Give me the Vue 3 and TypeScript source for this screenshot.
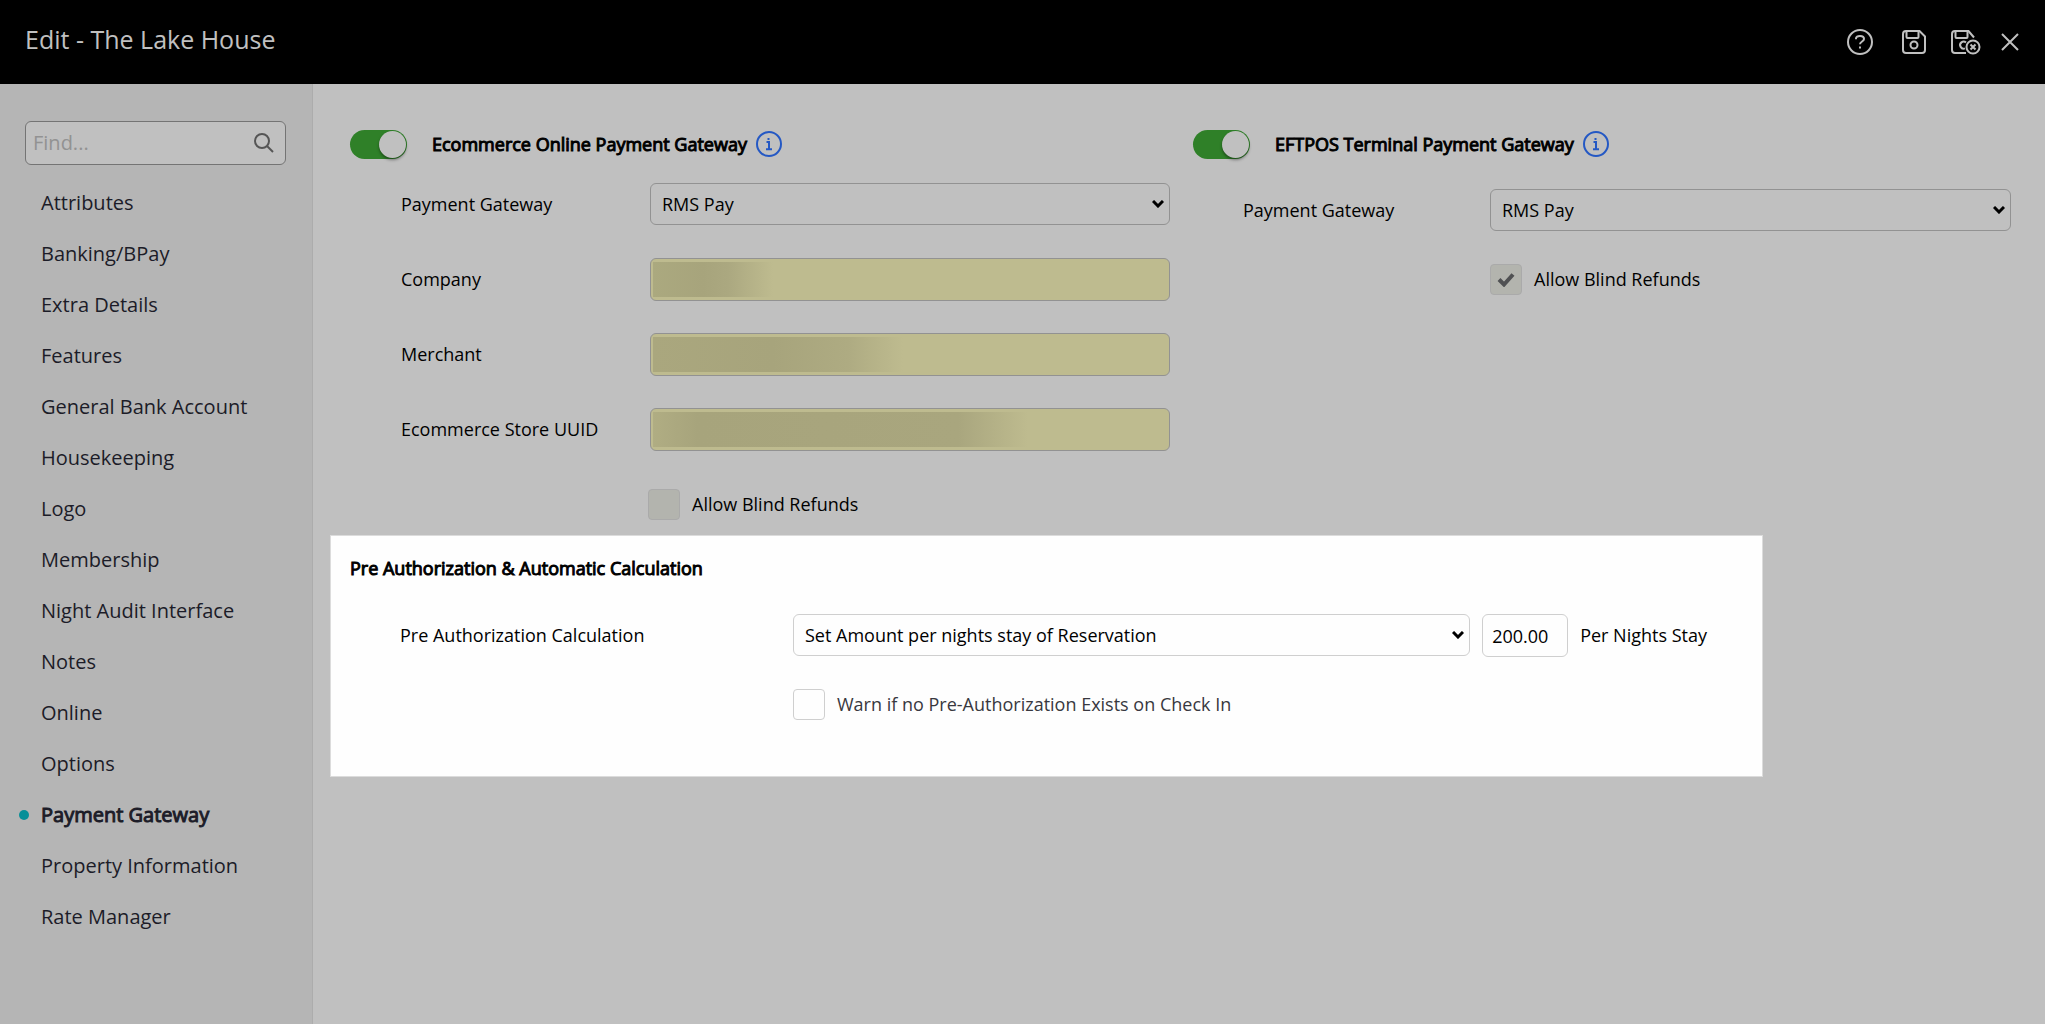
<script setup lang="ts">
import { ref } from 'vue'

interface MaskedField {
  id: string
  label: string
  mask: 'short' | 'medium' | 'long'
}

const menu: string[] = [
  'Attributes',
  'Banking/BPay',
  'Extra Details',
  'Features',
  'General Bank Account',
  'Housekeeping',
  'Logo',
  'Membership',
  'Night Audit Interface',
  'Notes',
  'Online',
  'Options',
  'Payment Gateway',
  'Property Information',
  'Rate Manager',
]
const active = ref('Payment Gateway')
const search = ref('')

const maskedFields: MaskedField[] = [
  { id: 'company', label: 'Company', mask: 'short' },
  { id: 'merchant', label: 'Merchant', mask: 'medium' },
  { id: 'store-uuid', label: 'Ecommerce Store UUID', mask: 'long' },
]

const ecommerceOn = ref(true)
const eftposOn = ref(true)
const ecommerceGateway = ref('RMS Pay')
const eftposGateway = ref('RMS Pay')
const calculation = ref('Set Amount per nights stay of Reservation')
const amount = ref('200.00')
const warn = ref(false)
</script>

<template>
  <div class="page">
    <header class="topbar">
      <h1>Edit - The Lake House</h1>
      <div class="actions">
        <button type="button" aria-label="Help">
          <svg width="26" height="26" viewBox="0 0 26 26">
            <circle cx="13" cy="13" r="12" />
            <path d="M9 10.2V9.6C9 7.9 10.6 7 13 7s4 1 4 3c0 2.400-4 2.600-4 5.200" />
            <path d="M13 17.600v2" />
          </svg>
        </button>
        <button type="button" aria-label="Save">
          <svg width="24" height="24" viewBox="0 0 24 24">
            <path d="M4 1h13.500L23 6.500V20a3 3 0 0 1-3 3H4a3 3 0 0 1-3-3V4a3 3 0 0 1 3-3z" />
            <path d="M4.500 1v6a1 1 0 0 0 1 1h10a1 1 0 0 0 1-1V1" />
            <circle cx="12" cy="15" r="3.500" />
          </svg>
        </button>
        <button type="button" aria-label="Save and close">
          <svg width="30" height="26" viewBox="0 0 30 26">
            <path d="M15 24H4a3 3 0 0 1-3-3V5a3 3 0 0 1 3-3h13.500L23 8.500" />
            <path d="M4.500 2v6a1 1 0 0 0 1 1h10a1 1 0 0 0 1-1V2" />
            <path d="M15 13.500a3.500 3.500 0 1 0-1 5.800" />
            <circle cx="22" cy="18" r="6.500" />
            <path d="M19.500 15.500l5 5M24.500 15.500l-5 5" />
          </svg>
        </button>
        <button type="button" aria-label="Close">
          <svg width="18" height="18" viewBox="0 0 18 18">
            <path d="M1 1l16 16M17 1L1 17" />
          </svg>
        </button>
      </div>
    </header>

    <div class="body">
      <aside class="sidebar">
        <div class="search">
          <input v-model="search" type="text" placeholder="Find..." aria-label="Find" />
          <svg width="20" height="20" viewBox="0 0 20 20">
            <circle cx="8" cy="8" r="7" />
            <path d="M13 13l6 6" />
          </svg>
        </div>
        <nav>
          <a
            v-for="item in menu"
            :key="item"
            href="#"
            :class="{ active: item === active }"
            @click.prevent="active = item"
          >{{ item }}</a>
        </nav>
      </aside>

      <main>
        <div class="columns">
          <section class="gateway">
            <div class="heading">
              <input id="ecommerce" v-model="ecommerceOn" class="toggle" type="checkbox" role="switch" />
              <label for="ecommerce" class="strong">Ecommerce Online Payment Gateway</label>
              <button type="button" class="info" aria-label="About the online gateway">
                <svg width="26" height="26" viewBox="0 0 26 26">
                  <circle cx="13" cy="13" r="12" />
                  <path d="M10.500 11H13v7M10 18.200h6M12.500 7v2" />
                </svg>
              </button>
            </div>
            <div class="row">
              <label for="ecommerce-gateway">Payment Gateway</label>
              <div class="picker">
                <select id="ecommerce-gateway" v-model="ecommerceGateway">
                  <option>RMS Pay</option>
                </select>
                <svg width="12" height="8" viewBox="0 0 12 8"><path d="M1 1l5 5 5-5" /></svg>
              </div>
            </div>
            <div v-for="field in maskedFields" :key="field.id" class="row">
              <label :for="field.id">{{ field.label }}</label>
              <div class="masked">
                <input :id="field.id" type="text" readonly />
                <span :class="['mask', field.mask]"></span>
              </div>
            </div>
            <label class="check indent">
              <span class="box"><input type="checkbox" disabled /></span>
              <span class="text">Allow Blind Refunds</span>
            </label>
          </section>

          <section class="gateway eftpos">
            <div class="heading">
              <input id="eftpos" v-model="eftposOn" class="toggle" type="checkbox" role="switch" />
              <label for="eftpos" class="strong">EFTPOS Terminal Payment Gateway</label>
              <button type="button" class="info" aria-label="About the terminal gateway">
                <svg width="26" height="26" viewBox="0 0 26 26">
                  <circle cx="13" cy="13" r="12" />
                  <path d="M10.500 11H13v7M10 18.200h6M12.500 7v2" />
                </svg>
              </button>
            </div>
            <div class="row">
              <label for="eftpos-gateway">Payment Gateway</label>
              <div class="picker">
                <select id="eftpos-gateway" v-model="eftposGateway">
                  <option>RMS Pay</option>
                </select>
                <svg width="12" height="8" viewBox="0 0 12 8"><path d="M1 1l5 5 5-5" /></svg>
              </div>
            </div>
            <label class="check indent">
              <span class="box">
                <input type="checkbox" checked disabled />
                <svg width="18" height="15" viewBox="0 0 18 15">
                  <path d="M2 7.500l5 5L16 2.500" />
                </svg>
              </span>
              <span class="text">Allow Blind Refunds</span>
            </label>
          </section>
        </div>

        <section class="panel">
          <h2 class="strong">Pre Authorization &amp; Automatic Calculation</h2>
          <div class="calc">
            <label for="calculation">Pre Authorization Calculation</label>
            <div class="picker">
              <select id="calculation" v-model="calculation">
                <option>Set Amount per nights stay of Reservation</option>
              </select>
              <svg width="12" height="8" viewBox="0 0 12 8"><path d="M1 1l5 5 5-5" /></svg>
            </div>
            <input id="amount" v-model="amount" type="text" />
            <label for="amount">Per Nights Stay</label>
          </div>
          <label class="check warn">
            <span class="box"><input v-model="warn" type="checkbox" /></span>
            <span class="text">Warn if no Pre-Authorization Exists on Check In</span>
          </label>
        </section>
      </main>
    </div>
  </div>
</template>

<style>
body {
  margin: 0;
  background: #c0c0c0;
}
</style>

<style scoped>
* {
  box-sizing: border-box;
}

.page {
  display: flex;
  flex-direction: column;
  min-height: 100vh;
  background: #c0c0c0;
  color: #000;
  font: 18px/24px "Open Sans", "Noto Sans", sans-serif;
}

button,
input,
select {
  margin: 0;
  font: inherit;
  color: inherit;
}

button {
  display: flex;
  padding: 0;
  border: 0;
  background: none;
  cursor: pointer;
}

svg {
  display: block;
  fill: none;
  stroke: currentColor;
  stroke-width: 2;
}

/* Top bar */
.topbar {
  display: flex;
  justify-content: space-between;
  height: 84px;
  padding: 0 26px 0 25px;
  background: #000;
  color: #c0c0c0;
}

.topbar h1 {
  margin: 0;
  font-size: 25px;
  font-weight: 400;
  line-height: 78px;
}

.actions {
  display: flex;
  align-items: center;
}

.actions button {
  margin-left: 29px;
}

.actions button:nth-child(3) {
  margin-left: 25px;
}

.actions button:last-child {
  margin-left: 20px;
}

/* Sidebar */
.body {
  display: flex;
  flex: 1;
}

.sidebar {
  flex: 0 0 313px;
  min-width: 0;
  padding: 37px 26px 0 25px;
  border-right: 1px solid #acacac;
  background: #b5b5b5;
  color: #1c1c28;
  font-size: 20px;
}

.search {
  display: flex;
  align-items: center;
  height: 44px;
  padding: 0 11px 0 7px;
  border: 1px solid #747474;
  border-radius: 6px;
  background: #c0c0c0;
}

.search input {
  flex: 1;
  width: 100%;
  min-width: 0;
  padding: 0;
  border: 0;
  outline: 0;
  background: none;
}

.search input::placeholder {
  color: #929292;
  opacity: 1;
}

.search svg {
  flex: none;
  color: #555;
}

nav {
  display: flex;
  flex-direction: column;
  margin-top: 12px;
}

nav a {
  position: relative;
  padding-left: 16px;
  color: inherit;
  line-height: 51px;
  text-decoration: none;
}

nav a.active {
  -webkit-text-stroke: 1px currentColor;
}

nav a.active::before {
  content: "";
  position: absolute;
  top: 21px;
  left: -6px;
  width: 10px;
  height: 10px;
  border-radius: 50%;
  background: #078f98;
}

/* Content */
main {
  flex: 1;
  min-width: 0;
  padding-top: 46px;
}

.columns {
  display: grid;
  grid-template-columns: 1fr 1fr;
  padding: 0 9px 0 37px;
}

.gateway {
  padding-right: 23px;
}

.heading {
  display: flex;
  align-items: center;
  height: 29px;
}

.strong {
  font-size: 18px;
  font-weight: 400;
  -webkit-text-stroke: 1px currentColor;
}

.toggle {
  appearance: none;
  display: flex;
  width: 57px;
  height: 29px;
  padding: 1px;
  margin-right: 25px;
  border-radius: 15px;
  background: #8a8a8a;
}

.toggle::before {
  content: "";
  width: 27px;
  height: 27px;
  border-radius: 50%;
  background: #c0c0c0;
  box-shadow: 0 2px 3px rgb(0 0 0 / 40%);
}

.toggle:checked {
  justify-content: flex-end;
  background: #2f8028;
}

.info {
  margin-left: 9px;
  color: #2458c4;
}

.heading label,
.info,
.row > label,
.calc > label,
.text {
  padding-bottom: 2px;
}

.row {
  display: flex;
  align-items: center;
  height: 43px;
  margin-top: 32px;
}

.heading + .row {
  margin-top: 24px;
}

.row > label {
  flex: 0 0 249px;
  margin-left: 51px;
}

.picker {
  display: grid;
  flex: 1;
  align-self: flex-start;
  align-items: center;
  min-width: 0;
}

.picker > * {
  grid-area: 1 / 1;
}

.picker svg {
  justify-self: end;
  margin-right: 6px;
  stroke-width: 3;
  pointer-events: none;
}

select {
  appearance: none;
  width: 100%;
  height: 42px;
  padding: 0 24px 0 11px;
  border: 1px solid #929292;
  border-radius: 6px;
  background: transparent;
}

.masked {
  display: grid;
  flex: 1;
  align-items: center;
}

.masked > * {
  grid-area: 1 / 1;
}

.masked input {
  width: 100%;
  height: 43px;
  border: 1px solid #929292;
  border-radius: 6px;
  background: #bebb8f;
}

.mask {
  height: 35px;
  margin-left: 3px;
}

.short {
  width: 130px;
  background: linear-gradient(90deg, #aba97f, #a7a47c 50px, #aba880 75px, #bebb8f 120px);
}

.medium {
  width: 270px;
  background: linear-gradient(90deg, #aaa77e, #a7a47c 120px, #aeab82 195px, #bebb8f 250px);
}

.long {
  width: 400px;
  background: linear-gradient(90deg, #b0ad83, #a7a47c 45px, #a9a67e 305px, #bebb8f 375px);
}

.check {
  display: flex;
  align-items: center;
  gap: 12px;
}

.indent {
  margin: 38px 0 0 298px;
}

.box {
  display: grid;
  place-items: center;
}

.box > * {
  grid-area: 1 / 1;
}

.box input {
  appearance: none;
  width: 32px;
  height: 31px;
  border: 1px solid #cfcfcf;
  border-radius: 4px;
  background: #fefefe;
}

.box input:disabled {
  border-color: #aaa;
  background: #b3b4ae;
}

.box svg {
  z-index: 1;
  color: #505153;
  stroke-width: 4;
}

.eftpos {
  padding-right: 25px;
}

.eftpos .heading + .row {
  margin-top: 30px;
}

.eftpos .row > label {
  flex-basis: 247px;
  margin-left: 50px;
}

.eftpos .indent {
  margin: 32px 0 0 297px;
}

/* Pre-authorization panel */
.panel {
  margin: 15px 282px 0 17px;
  padding: 20px 55px 56px 19px;
  border: 1px solid #dcdcdc;
  background: #fefefe;
}

.panel h2 {
  margin: 0;
}

.panel select,
.calc input {
  border-color: #cfcfcf;
}

.calc {
  display: flex;
  align-items: center;
  margin: 34px 0 0 50px;
}

.calc > label:first-child {
  flex: 0 0 393px;
}

.calc input {
  width: 86px;
  height: 43px;
  margin: 0 12px;
  padding: 0 9px;
  border: 1px solid #cfcfcf;
  border-radius: 6px;
  background: #fefefe;
}

.warn {
  margin: 32px 0 0 443px;
  color: #38383f;
}
</style>
